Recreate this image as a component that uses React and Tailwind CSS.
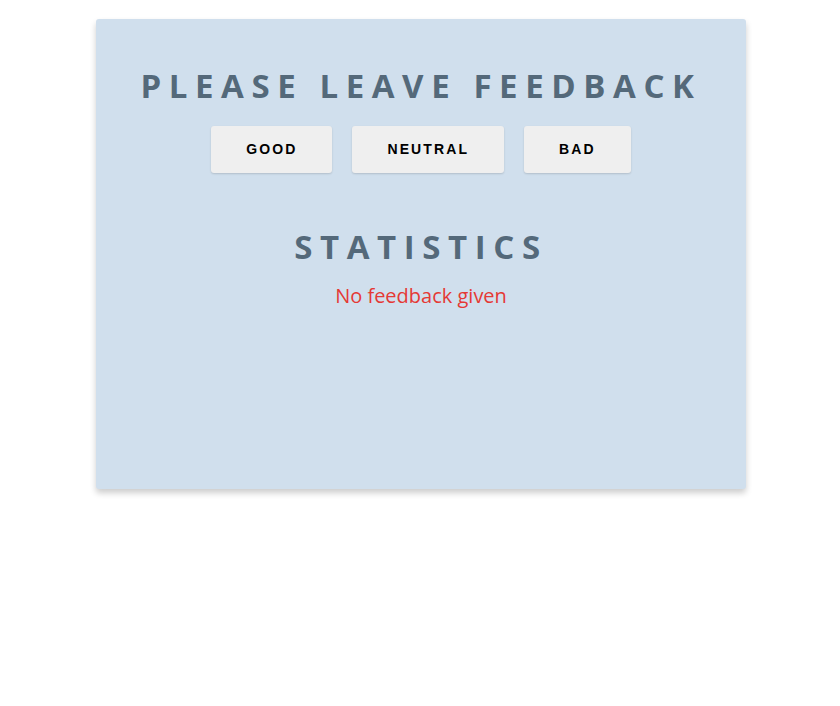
import React, { useState } from "react";

const options = ["good", "neutral", "bad"];

const App = () => {
  const [votes, setVotes] = useState({ good: 0, neutral: 0, bad: 0 });
  const total = votes.good + votes.neutral + votes.bad;

  return (
    <div className="min-h-screen bg-white pt-[19px]">
      <div className="w-[650px] h-[470px] ml-[96px] bg-[#d0dfed] rounded-[3px] shadow-[0_4px_6px_rgba(0,0,0,0.2)] flex flex-col items-center pt-[43px] font-['Open_Sans',sans-serif]">
        <h1 className="text-[33px] leading-[48px] font-bold uppercase tracking-[0.23em] text-[#54697a]">
          Please leave feedback
        </h1>
        <div className="flex gap-5 mt-[16px]">
          {options.map((opt) => (
            <button
              key={opt}
              onClick={() => setVotes({ ...votes, [opt]: votes[opt] + 1 })}
              className="h-[47px] px-[35px] bg-[#efefef] rounded-[3px] shadow-[0_1px_2px_rgba(0,0,0,0.15)] font-['Liberation_Sans',sans-serif] font-bold text-[14px] uppercase tracking-[0.15em] text-black"
            >
              {opt}
            </button>
          ))}
        </div>
        <h2 className="mt-[50px] text-[33px] leading-[48px] font-bold uppercase tracking-[0.23em] text-[#54697a]">
          Statistics
        </h2>
        {total === 0 ? (
          <p className="mt-[10px] text-[20px] text-[#e53935]">No feedback given</p>
        ) : (
          <ul className="mt-[10px] text-[20px] text-[#54697a]">
            <li>Good: {votes.good}</li>
            <li>Neutral: {votes.neutral}</li>
            <li>Bad: {votes.bad}</li>
          </ul>
        )}
      </div>
    </div>
  );
};

export default App;
